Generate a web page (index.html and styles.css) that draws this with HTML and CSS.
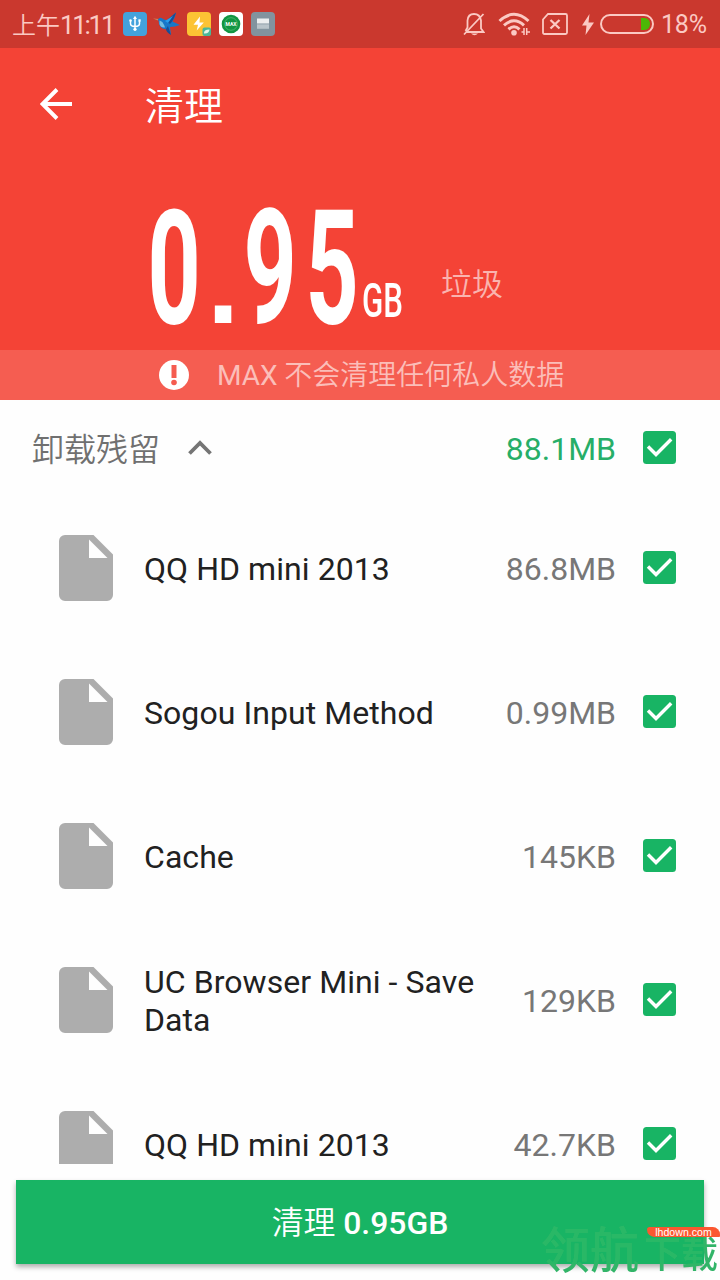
FILE: index.html
```html
<!DOCTYPE html>
<html lang="zh-CN">
<head>
<meta charset="utf-8">
<title>清理</title>
<link rel="stylesheet" href="styles.css">
</head>
<body>
<svg width="0" height="0" class="defs">
  <symbol id="file" viewBox="0 0 54 66"><path fill="#adadad" fill-rule="evenodd" d="M6 0H34.500L54 19.500V60a6 6 0 0 1-6 6H6a6 6 0 0 1-6-6V6a6 6 0 0 1 6-6ZM30 4.500V23H48.500Z"/></symbol>
  <symbol id="check" viewBox="0 0 33 33"><rect width="33" height="33" rx="3.500" fill="#18b464"/><path d="M5 15.500 13 23.500 28.200 8.300" fill="none" stroke="#fff" stroke-width="3.400"/></symbol>
</svg>
<div class="screen">
  <header class="status">
    <span class="time">上午<span class="clock">11:11</span></span>
    <div class="notifications">
      <svg width="24" height="24" viewBox="0 0 24 24"><rect width="24" height="24" rx="4" fill="#43a2dc"/><g fill="none" stroke="#fff" stroke-width="1.500"><path d="M12 5.500V17M7.500 9v2.500c0 2.200 2 3 4.500 3s4.500-.8 4.500-3V9"/></g><path d="M12 3.800 14 7H10Z" fill="#fff"/><circle cx="7.500" cy="8.500" r="1.300" fill="#fff"/><circle cx="12" cy="17.300" r="1.600" fill="#fff"/><path d="M15.400 7.300h2.300v2.300h-2.300z" fill="#fff"/></svg>
      <svg width="28" height="24" viewBox="0 0 28 24"><path d="M0 6.500 6 7 5 8.500Z" fill="#c8875c"/><path d="M5 7.500Q7 4.500 10 7L14 8.500 23 0.500Q22 6 19.500 9.500L27 13Q22 15 17 15L18 23Q15 20 14 17Q8 18 6 12Q6 9 5 7.500Z" fill="#1677c9"/><path d="M13 9 23 0.500Q21 8 17 12ZM15 14 18 23Q13 20 13 17Z" fill="#174e96"/><path d="M6.500 8.500Q10 9 12 15.500Q7.500 16 6.500 12Z" fill="#73bde0"/><path d="M12 9 20 4 15 11Z" fill="#269eed"/></svg>
      <svg width="24" height="24" viewBox="0 0 24 24"><rect width="24" height="24" rx="4" fill="#fcc334"/><path d="M13 4.500 6.500 12.700H11L9.700 18.500 16.800 10.500H12.500Z" fill="#fff"/><rect x="15.500" y="15.500" width="8.500" height="8.500" rx="2" fill="#49b798"/><path d="M17 21.500Q16.500 17.500 22.500 17.500Q22 22 17 21.500Z" fill="#e3f7e8"/></svg>
      <svg width="24" height="24" viewBox="0 0 24 24"><rect width="24" height="24" rx="4" fill="#fff"/><circle cx="12" cy="12" r="9.300" fill="#129542"/><circle cx="12" cy="12" r="6.300" fill="none" stroke="#53bb73" stroke-width=".8"/><text class="max-mark" x="12" y="14" text-anchor="middle">MAX</text></svg>
      <svg width="24" height="24" viewBox="0 0 24 24"><rect width="24" height="24" rx="4" fill="#82939e"/><path d="M6 6.500h12v5H6z" fill="#eceff0"/><path d="M6 12.300h12v4.500H6z" fill="#b9c4ca"/></svg>
    </div>
    <div class="system">
      <svg class="bell" width="22" height="24" viewBox="0 0 22 24"><g fill="none" stroke="#fbc9c3" stroke-width="1.800"><path d="M2.500 20H20.500L18 16.500V8.500Q17 2 11 2Q5 2 4.500 8.500V15.500L2.500 19M1 22.500 20.500 2"/></g><path d="M8 21.500h7Q11.500 25 8 21.500Z" fill="#fbc9c3"/></svg>
      <svg class="wifi" width="33" height="24" viewBox="0 0 33 24"><g fill="none" stroke="#fbc9c3" stroke-width="3"><path d="M1.500 9Q16 -4.500 30.500 9"/><path d="M6 13.300Q16 4.300 26 13.300"/><path d="M10.500 17.300Q16 12.300 21.500 17.300"/></g><circle cx="16" cy="20.700" r="2.800" fill="#fbc9c3"/><path d="M26 16v7M28.700 16v7M23.500 20h2.500M28.700 20h3.300" fill="none" stroke="#fbc9c3" stroke-width="1.500"/></svg>
      <svg class="sim" width="26" height="22" viewBox="0 0 26 22"><path d="M6 1H23.500Q25 1 25 2.500V19.500Q25 21 23.500 21H2.500Q1 21 1 19.500V6.500Z" fill="none" stroke="#fbc9c3" stroke-width="1.800"/><path d="M8.500 7 17.500 15.500M17.500 7 8.500 15.500" fill="none" stroke="#fbc9c3" stroke-width="2.300"/></svg>
      <svg class="bolt" width="12" height="21" viewBox="0 0 12 21"><path d="M7.500 0 0 11.500H4.500L3.500 21 12 8.500H6.500Z" fill="#fbc9c3"/></svg>
      <svg class="battery" width="54" height="20" viewBox="0 0 54 20"><rect x="1" y="1" width="52" height="18" rx="9" fill="none" stroke="#fbc9c3" stroke-width="2"/><path d="M41 4h3.500Q50 4.500 50 10T44.500 16H41Z" fill="#4cb806"/></svg>
      <span class="percent">18%</span>
    </div>
  </header>
  <section class="hero">
    <nav class="bar">
      <svg width="33" height="32" viewBox="0 0 33 32"><path d="M32 16H3M17 1.500 2.500 16 17 30.500" fill="none" stroke="#fff" stroke-width="3.900"/></svg>
      <h1>清理</h1>
    </nav>
    <div class="amount">
      <span class="digit">0</span><span class="dot">.</span><span class="digit">9</span><span class="digit">5</span>
      <span class="unit">GB</span><span class="junk">垃圾</span>
    </div>
    <div class="notice">
      <svg width="30" height="30" viewBox="0 0 30 30"><circle cx="15" cy="15" r="15" fill="#fff"/><path d="M12.500 5h5v13h-5z" fill="#f55c50"/><circle cx="15" cy="22.500" r="2.800" fill="#f55c50"/></svg>
      <span class="notice-text"><span class="brand">MAX</span> 不会清理任何私人数据</span>
    </div>
  </section>
  <main class="list">
    <div class="group">
      <span class="group-name">卸载残留</span>
      <svg class="chevron" width="24" height="16" viewBox="0 0 24 16"><path d="M1.500 13.500 12 3 22.500 13.500" fill="none" stroke="#757575" stroke-width="3.800"/></svg>
      <span class="size total">88.1MB</span><svg class="check"><use href="#check"/></svg>
    </div>
    <div class="row"><svg class="file"><use href="#file"/></svg><span class="name">QQ HD mini 2013</span><span class="size">86.8MB</span><svg class="check"><use href="#check"/></svg></div>
    <div class="row"><svg class="file"><use href="#file"/></svg><span class="name">Sogou Input Method</span><span class="size">0.99MB</span><svg class="check"><use href="#check"/></svg></div>
    <div class="row"><svg class="file"><use href="#file"/></svg><span class="name">Cache</span><span class="size">145KB</span><svg class="check"><use href="#check"/></svg></div>
    <div class="row"><svg class="file"><use href="#file"/></svg><span class="name">UC Browser Mini - Save Data</span><span class="size">129KB</span><svg class="check"><use href="#check"/></svg></div>
    <div class="row"><svg class="file"><use href="#file"/></svg><span class="name">QQ HD mini 2013</span><span class="size">42.7KB</span><svg class="check"><use href="#check"/></svg></div>
  </main>
  <button class="clean">清理 <b>0.95GB</b></button>
  <div class="watermark">领航<small>下载</small></div>
  <div class="tag">lhdown.com</div>
</div>
</body>
</html>
```
FILE: styles.css
```css
* { box-sizing: border-box; }
body { margin: 0; background: #fff; font-family: Roboto, "Noto Sans CJK SC", sans-serif; }
svg { flex: none; display: block; }
.defs { position: absolute; }
.screen { position: relative; width: 720px; height: 1280px; overflow: hidden; background: #fefefe; }
.status { height: 48px; background: #ca382e; display: flex; align-items: center; padding: 0 12px; color: #fbc9c3; }
.time { width: 111px; font: 350 24px/46px "Noto Sans CJK SC", sans-serif; white-space: nowrap; }
.clock { font-family: Roboto, sans-serif; font-size: 26px; font-weight: 400; letter-spacing: -2.3px; }
.notifications { display: flex; gap: 8px; }
.notifications svg:nth-child(2) { margin: 0 -2px; }
.max-mark { font: bold 5px Roboto, sans-serif; fill: #fff; }
.system { margin-left: auto; display: flex; align-items: center; }
.wifi { margin-left: 13px; }
.sim { margin-left: 11px; }
.bolt { margin-left: 14px; }
.battery { margin-left: 6px; }
.percent { margin-left: 7px; width: 47px; padding-top: 2px; font: 400 25px/46px Roboto, sans-serif; letter-spacing: -.2px; white-space: nowrap; }
.hero { height: 352px; background: #f44336; color: #fff; display: flex; flex-direction: column; }
.bar { height: 112px; display: flex; align-items: center; padding-left: 40px; }
.bar h1 { margin: 0 0 0 72px; padding-top: 5px; font-size: 39px; font-weight: 350; line-height: 56px; }
.amount { height: 190px; padding: 14px 0 0 144px; display: flex; align-items: baseline; line-height: 190px; }
.digit { width: 62px; display: flex; justify-content: center; font-size: 160px; font-weight: 700; transform: translateX(-1px) scaleX(.58); }
.dot { width: 34px; font-family: "Liberation Sans", sans-serif; font-size: 116px; font-weight: 700; text-align: center; line-height: 1; }
.unit { align-self: flex-end; width: 44px; margin: 0 0 25px -2px; font-size: 48px; font-weight: 500; line-height: 48px; transform: scaleX(.65); transform-origin: left; }
.junk { align-self: flex-end; margin: 0 0 45px 35px; font-size: 31px; font-weight: 350; line-height: 40px; color: #fab4af; }
.notice { height: 50px; background: #f55d51; display: flex; align-items: center; padding-left: 159px; gap: 28px; font-size: 28px; font-weight: 350; color: #fbbeb9; white-space: nowrap; }
.notice-text { padding-bottom: 4px; }
.brand { font-weight: 400; }
.list { height: 764px; overflow: hidden; }
.group { height: 96px; display: flex; align-items: center; padding: 0 44px 0 32px; }
.group-name { padding-bottom: 2px; font-size: 32px; font-weight: 350; color: #707070; }
.chevron { margin-left: 28px; }
.size { margin-left: auto; margin-right: 27px; font-size: 32px; line-height: 38px; color: #777; padding-top: 2px; }
.total { color: #27ae68; }
.check { width: 33px; height: 33px; margin-bottom: 2px; }
.row { height: 144px; display: flex; align-items: center; padding: 0 44px 0 59px; }
.file { width: 54px; height: 66px; }
.name { width: 345px; margin-left: 31px; padding-top: 2px; font-size: 32px; line-height: 38px; letter-spacing: .06px; color: #212121; }
.clean { display: block; width: 688px; height: 84px; margin: 16px 16px 0; padding: 3px 0 0; border: 0; background: #18b464; color: #fff; font: 350 31.9px/81px Roboto, "Noto Sans CJK SC", sans-serif; box-shadow: 0 3px 5px rgba(0,0,0,.32); }
.clean b { font-weight: 500; }
.watermark { position: absolute; left: 541px; top: 1211px; height: 69px; width: 179px; white-space: nowrap; font: 500 49px/72px "Noto Sans CJK SC", sans-serif; color: transparent; background: linear-gradient(#29b866, #29b866) 0 0 / 163px 53px no-repeat, #32b468; background-clip: text; -webkit-background-clip: text; }
.watermark small { margin-left: 5px; font-size: 37px; }
.tag { position: absolute; left: 647px; top: 1227px; width: 73px; height: 10px; border-radius: 3px 8px 1px 8px; background: #fb5730; color: #fff; font: 10.6px/10px "Liberation Sans", sans-serif; text-align: center; }
```
